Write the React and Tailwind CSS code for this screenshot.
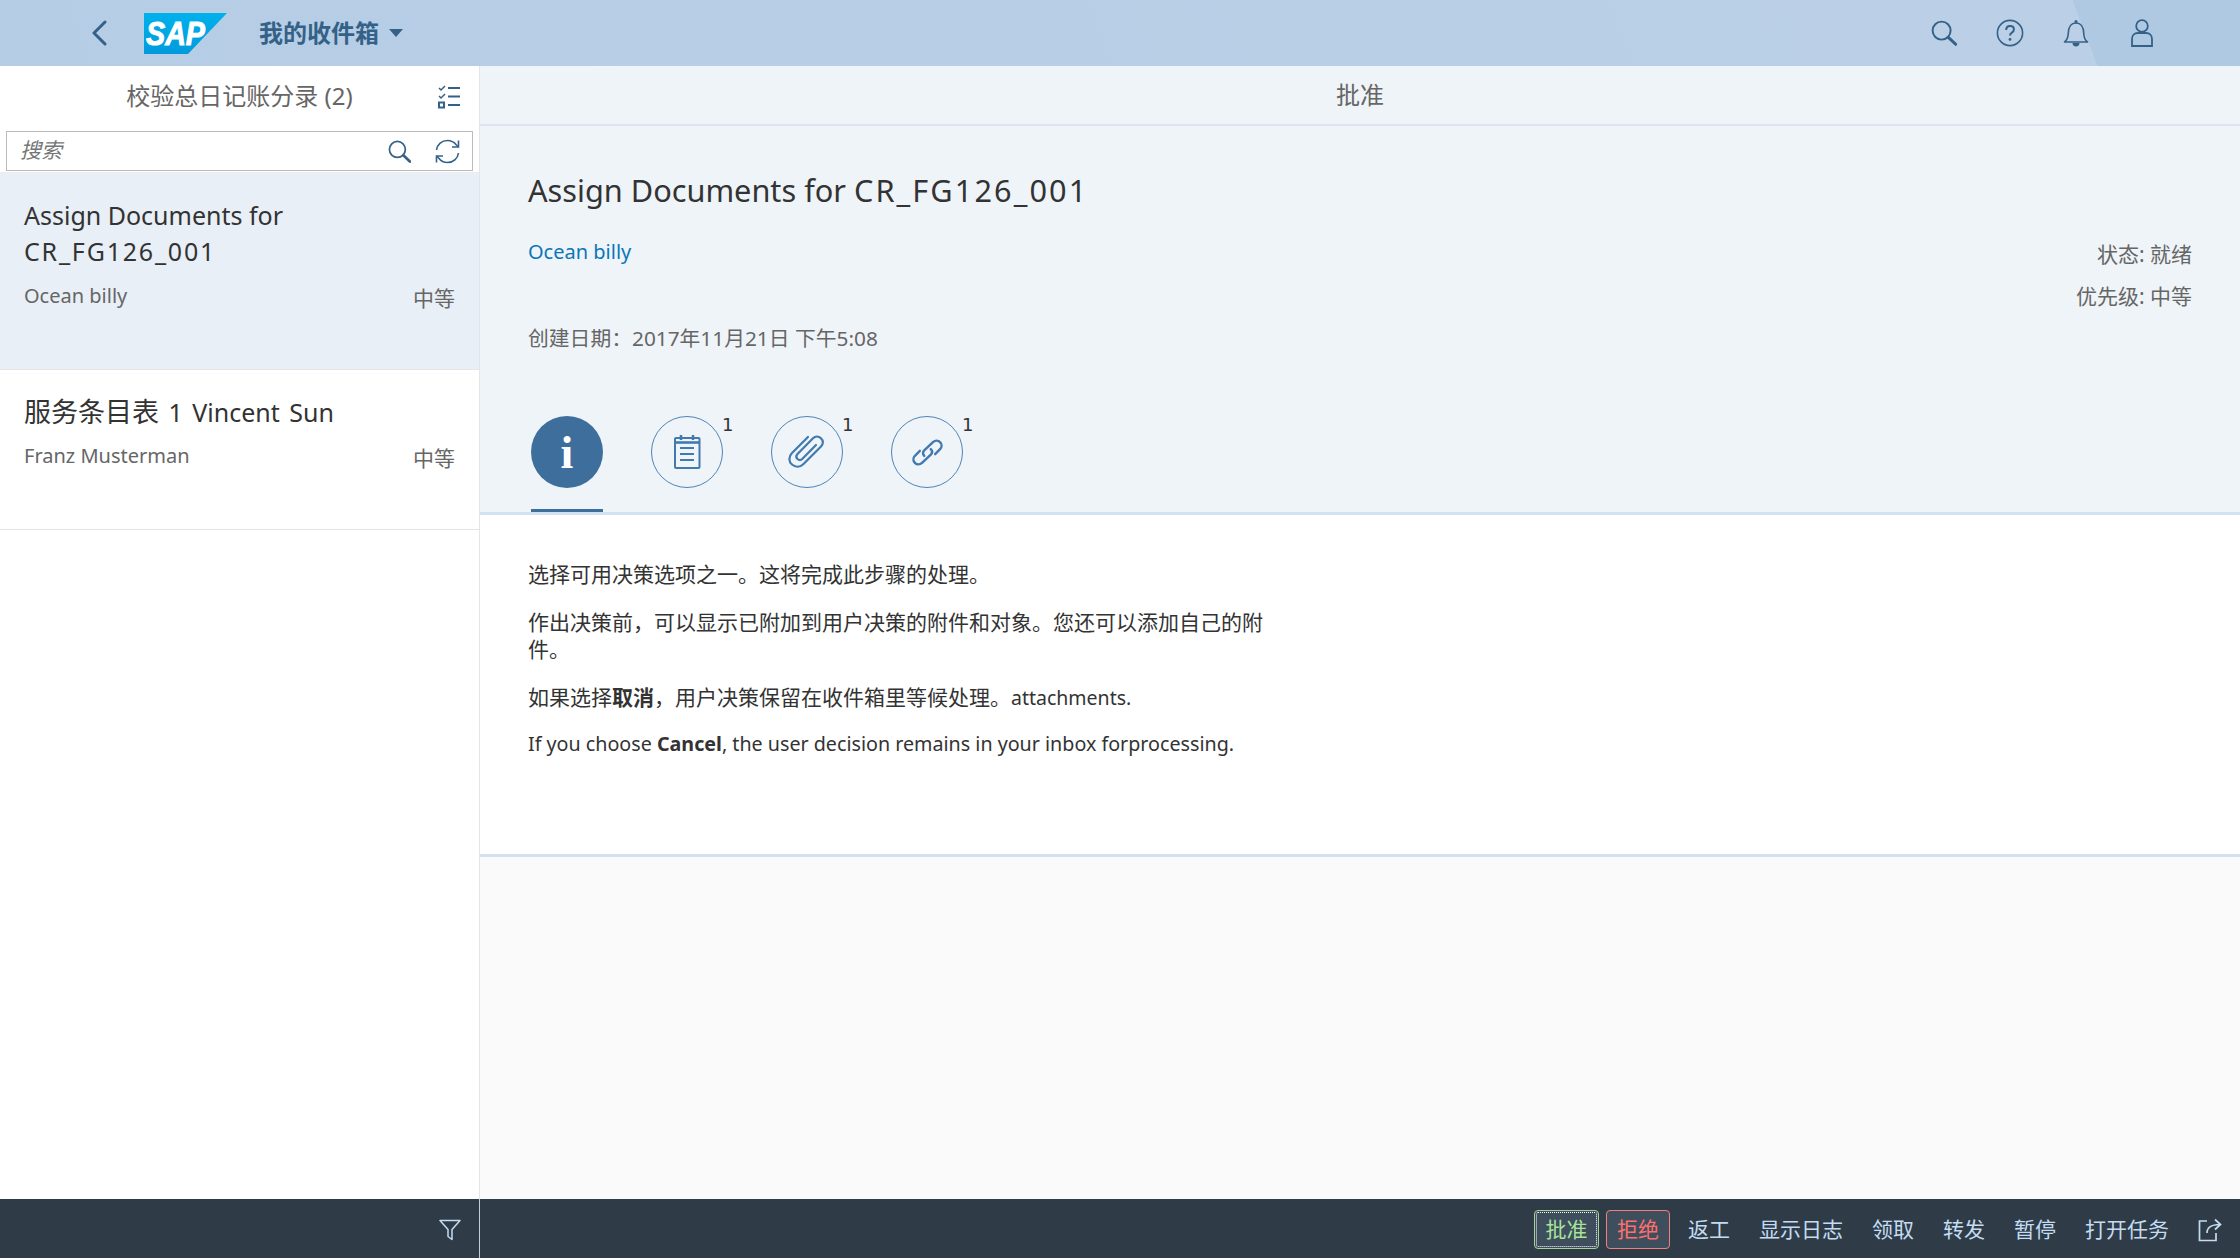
const FONT = "font-['Noto_Sans','Noto_Sans_CJK_SC',sans-serif]"

function SapLogo() {
  return (
    <svg width="83" height="41" viewBox="0 0 83 41">
      <defs>
        <linearGradient id="sapfill" x1="0" y1="0" x2="0" y2="1">
          <stop offset="0" stopColor="#00b1eb" />
          <stop offset="1" stopColor="#009bdc" />
        </linearGradient>
      </defs>
      <polygon points="0,0 83,0 44,41 0,41" fill="url(#sapfill)" />
      <text x="2" y="32" fontFamily="Liberation Sans" fontWeight="700" fontStyle="italic" fontSize="33" textLength="59" lengthAdjust="spacingAndGlyphs" stroke="#fff" strokeWidth="1" fill="#fff">SAP</text>
    </svg>
  )
}

function Back() {
  return (
    <svg width="16" height="26" viewBox="0 0 16 26" fill="none" stroke="#346187" strokeWidth="3" strokeLinecap="round" strokeLinejoin="round">
      <path d="M14 2 3 13l11 11" />
    </svg>
  )
}

function SearchIcon({ size = 24, color = '#346187' }) {
  return (
    <svg width={size} height={size} viewBox="0 0 24 24" fill="none" stroke={color} strokeWidth="1.8" strokeLinecap="round">
      <circle cx="9.8" cy="9.8" r="8.3" />
      <path d="m16 16 6.8 6.4" strokeWidth="2.8" />
    </svg>
  )
}

function HelpIcon() {
  return (
    <svg width="28" height="28" viewBox="0 0 28 28" fill="none" stroke="#346187" strokeWidth="1.6">
      <circle cx="14" cy="14" r="12.6" />
      <path d="M10.2 11c0-2.4 1.7-4 3.9-4s3.8 1.4 3.8 3.4c0 3.2-3.9 3-3.9 6.2" strokeWidth="2" />
      <circle cx="14" cy="20.4" r="1.4" fill="#346187" stroke="none" />
    </svg>
  )
}

function BellIcon() {
  return (
    <svg width="26" height="28" viewBox="0 0 26 28" fill="none" stroke="#346187" strokeWidth="1.6">
      <path d="M1.5 23c3-2.2 3.6-4.6 3.8-9 .2-6 3-10 7.7-10s7.5 4 7.7 10c.2 4.4.8 6.8 3.8 9z" strokeLinejoin="round" />
      <circle cx="13" cy="2.5" r="1.5" fill="#346187" stroke="none" />
      <path d="M9.5 24h7c0 2-1.4 3.5-3.5 3.5S9.5 26 9.5 24z" fill="#346187" stroke="none" />
    </svg>
  )
}

function UserIcon() {
  return (
    <svg width="22" height="28" viewBox="0 0 22 28" fill="none" stroke="#346187" strokeWidth="1.8">
      <circle cx="11" cy="7" r="5.8" />
      <path d="M1 27V20c0-3.6 2.4-6 6-6h8c3.6 0 6 2.4 6 6v7z" />
    </svg>
  )
}

function ListIcon() {
  return (
    <svg width="22" height="24" viewBox="0 0 22 24" fill="none" stroke="#346187" strokeWidth="1.5">
      <path d="m1 3 2 2 4-4M1 11l2 2 4-4" />
      <rect x="1" y="17.5" width="5" height="5" strokeWidth="2" />
      <path d="M10 3h12M10 11.5h12M10 20h12" strokeWidth="1.8" />
    </svg>
  )
}

function RefreshIcon() {
  return (
    <svg width="25" height="25" viewBox="0 0 25 25" fill="none" stroke="#346187" strokeWidth="1.6">
      <path d="M1.5 11C2.3 5.5 6.7 1.5 12.5 1.5c3.6 0 6.7 1.7 8.7 4.3L23.5 8" />
      <path d="M23.5 1.5V8H17" />
      <path d="M23.5 14c-.8 5.5-5.2 9.5-11 9.5-3.6 0-6.7-1.7-8.7-4.3L1.5 17" />
      <path d="M1.5 23.5V17H8" />
    </svg>
  )
}

function FilterIcon() {
  return (
    <svg width="22" height="22" viewBox="0 0 22 22" fill="none" stroke="#c4dcf2" strokeWidth="1.5" strokeLinejoin="round">
      <path d="M1 1.5h20l-8 9v10l-4-3v-7z" />
    </svg>
  )
}

function ShareIcon() {
  return (
    <svg width="24" height="24" viewBox="0 0 24 24" fill="none" stroke="#c4dcf2" strokeWidth="1.7">
      <path d="M9 3H1.5v19.5H18V15" />
      <path d="M9 15c0-5 3.5-8.5 13-8.5M17 1.5l5.5 5-5.5 5" />
    </svg>
  )
}

function NoteIcon() {
  return (
    <svg width="28" height="36" viewBox="0 0 28 36" fill="none" stroke="#4279ae" strokeWidth="2">
      <rect x="2" y="4" width="24.5" height="30" rx="1" />
      <path d="M2 8.5h24.5" strokeWidth="2.6" />
      <path d="M8 1v5M20 1v5" strokeWidth="2.5" />
      <path d="M7 14h14M7 20h14M7 26h14" />
    </svg>
  )
}

function ClipIcon() {
  return (
    <svg width="38" height="34" viewBox="0 0 38 34" fill="none" stroke="#4279ae" strokeWidth="2.2" strokeLinecap="round">
      <path d="M20 2 4 18c-3.5 3.5-3.5 8.500 0 11.500 3.500 3 8 3 11.500-.5L33 11.500c2.500-2.500 2.500-6 0-8.200-2.300-2.200-5.700-2.200-8 0L9.500 19c-1.500 1.500-1.500 3.500 0 5 1.400 1.300 3.300 1.300 4.700 0L28 10" />
    </svg>
  )
}

function LinkIcon() {
  return (
    <svg width="35" height="35" viewBox="0 0 32 32" fill="none" stroke="#4279ae" strokeWidth="2.2" strokeLinecap="round">
      <path d="M13 19c-1.500-1.500-1.500-3.500 0-5l8-7.500c2-1.800 4.800-1.800 6.500 0 1.800 1.800 1.800 4.600 0 6.500L23 17.500" />
      <path d="M19 13c1.500 1.500 1.500 3.500 0 5l-8 7.500c-2 1.800-4.800 1.800-6.500 0-1.800-1.800-1.800-4.600 0-6.500L9 14.500" />
    </svg>
  )
}

function IconTab({ count, children }) {
  return (
    <div className="relative w-[72px] h-[72px] rounded-full border border-[#4e84b5] flex items-center justify-center">
      {children}
      <span className="absolute left-[70px] top-[-2px] text-[18px] leading-[20px] text-[#333] font-['DejaVu_Sans',sans-serif]">{count}</span>
    </div>
  )
}

function ListItem({ title, sub, selected, height, gap }) {
  return (
    <div className={`px-6 border-b border-[#e5e5e5] pt-[24px] ${height} ${selected ? 'bg-[#e8eff6]' : 'bg-white'}`}>
      <div className="text-[25px] leading-[36px] text-[#333]">{title}</div>
      <div className={`flex justify-between ${gap}`}>
        <span className="text-[20px] leading-[28px] text-[#666]">{sub}</span>
        <span className="text-[21px] leading-[28px] text-[#666] mt-[2px]">中等</span>
      </div>
    </div>
  )
}

const actions = ['返工', '显示日志', '领取', '转发', '暂停', '打开任务']

export default function App() {
  return (
    <div className={`${FONT} w-[2240px] h-[1260px] flex flex-col overflow-hidden bg-white`}>
      <header className="h-[66px] shrink-0 flex items-center pl-[91px] pr-[87px] bg-[linear-gradient(69deg,#b5cde5_0%,#bbd0e7_92.6%,#b0c9e3_92.6%,#b0c9e3_100%)]">
        <Back />
        <div className="ml-[37px] h-[41px]"><SapLogo /></div>
        <span className="ml-[32px] text-[24px] font-bold text-[#346187]">我的收件箱</span>
        <span className="ml-[10px] w-0 h-0 border-x-[7px] border-x-transparent border-t-[8px] border-t-[#346187]" />
        <div className="ml-auto flex items-center">
          <SearchIcon size={26} />
          <span className="ml-[39px]"><HelpIcon /></span>
          <span className="ml-[39px]"><BellIcon /></span>
          <span className="ml-[42px]"><UserIcon /></span>
        </div>
      </header>

      <div className="flex-1 flex min-h-0">
        <aside className="w-[480px] shrink-0 border-r border-[#e5e5e5] flex flex-col bg-white">
          <div className="h-[65px] shrink-0 relative flex items-center justify-center text-[24px] text-[#666] pb-[6px]">
            校验总日记账分录 (2)
            <span className="absolute left-[438px] top-[19px]"><ListIcon /></span>
          </div>
          <div className="mx-[6px] h-[40px] shrink-0 border border-[#bbb] flex items-center pl-[13px] pr-[12px]">
            <span className="italic text-[21px] text-[#757575]">搜索</span>
            <span className="ml-auto"><SearchIcon size={23} /></span>
            <span className="ml-[24px]"><RefreshIcon /></span>
          </div>
          <div className="mt-[1px] border-t border-[#eee]">
            <ListItem selected height="h-[197px]" gap="mt-[13px]" title={<>Assign Documents for <span className="tracking-[1.8px]">CR_FG126_001</span></>} sub="Ocean billy" />
            <ListItem height="h-[160px]" gap="mt-[12px]" title={<span className="[word-spacing:3px]"><span className="text-[27px]">服务条目表</span> 1 Vincent Sun</span>} sub="Franz Musterman" />
          </div>
        </aside>

        <main className="flex-1 flex flex-col bg-[#fafafa] min-w-0">
          <div className="h-[60px] shrink-0 bg-[#eff4f9] border-b-2 border-[#dde6ef] flex items-center justify-center text-[24px] text-[#666]">批准</div>
          <section className="h-[386px] shrink-0 bg-[#eff4f9] px-[48px] pt-[42px]">
            <h1 className="text-[30.7px] leading-[44px] text-[#333]">Assign Documents for <span className="tracking-[2.1px]">CR_FG126_001</span></h1>
            <div className="flex justify-between mt-[26px]">
              <a className="text-[20px] leading-[28px] text-[#0a76b8]">Ocean billy</a>
              <div className="text-right text-[21px] leading-[42px] text-[#666] -mt-[5px]">
                <div>状态: 就绪</div>
                <div>优先级: 中等</div>
              </div>
            </div>
            <div className="text-[20.8px] leading-[28px] text-[#666] mt-[7px]">创建日期：2017年11月21日 下午5:08</div>
            <div className="flex gap-[48px] mt-[64px] ml-[3px]">
              <div className="relative w-[72px] h-[72px] rounded-full bg-[#3e6f9c] flex items-center justify-center text-white text-[46px] font-bold font-['Liberation_Serif',serif]">
                i
                <span className="absolute left-0 right-0 top-[93px] h-[3px] bg-[#3e6f9c]" />
              </div>
              <IconTab count="1"><NoteIcon /></IconTab>
              <IconTab count="1"><ClipIcon /></IconTab>
              <IconTab count="1"><LinkIcon /></IconTab>
            </div>
          </section>
          <section className="h-[345px] shrink-0 bg-white border-y-[3px] border-[#d3e2f0] px-[48px] pt-[46px] text-[21px] leading-[27px] text-[#333]">
            <p>选择可用决策选项之一。这将完成此步骤的处理。</p>
            <p className="mt-[21px] w-[740px]">作出决策前，可以显示已附加到用户决策的附件和对象。您还可以添加自己的附件。</p>
            <p className="mt-[21px]">如果选择<b>取消</b>，用户决策保留在收件箱里等候处理。<span className="text-[19.5px]">attachments.</span></p>
            <p className="mt-[19px] text-[19.7px]">If you choose <b>Cancel</b>, the user decision remains in your inbox forprocessing.</p>
          </section>
        </main>
      </div>

      <footer className="h-[59px] mb-[2px] shrink-0 flex bg-[#2f3c48] text-[21px] text-[#c4dcf2]">
        <div className="w-[480px] shrink-0 border-r border-[#c4cdd6] flex items-center justify-end pr-[18px] pt-[2px]">
          <FilterIcon />
        </div>
        <div className="flex-1 flex items-center justify-end pr-[18px] pt-[2px]">
          <button className="w-[65px] h-[39px] rounded-[4px] border border-[#a5d296] outline-1 outline-dotted outline-white -outline-offset-3 bg-[#3f4e5d] text-[#a8e39a]">批准</button>
          <button className="ml-[7px] w-[64px] h-[39px] rounded-[4px] border border-[#f07f7f] bg-[#3f4e5d] text-[#ff6e6e]">拒绝</button>
          <span className="ml-[18px]">返工</span>
          {actions.slice(1).map(a => <span key={a} className="ml-[29px]">{a}</span>)}
          <span className="ml-[29px]"><ShareIcon /></span>
        </div>
      </footer>
    </div>
  )
}
